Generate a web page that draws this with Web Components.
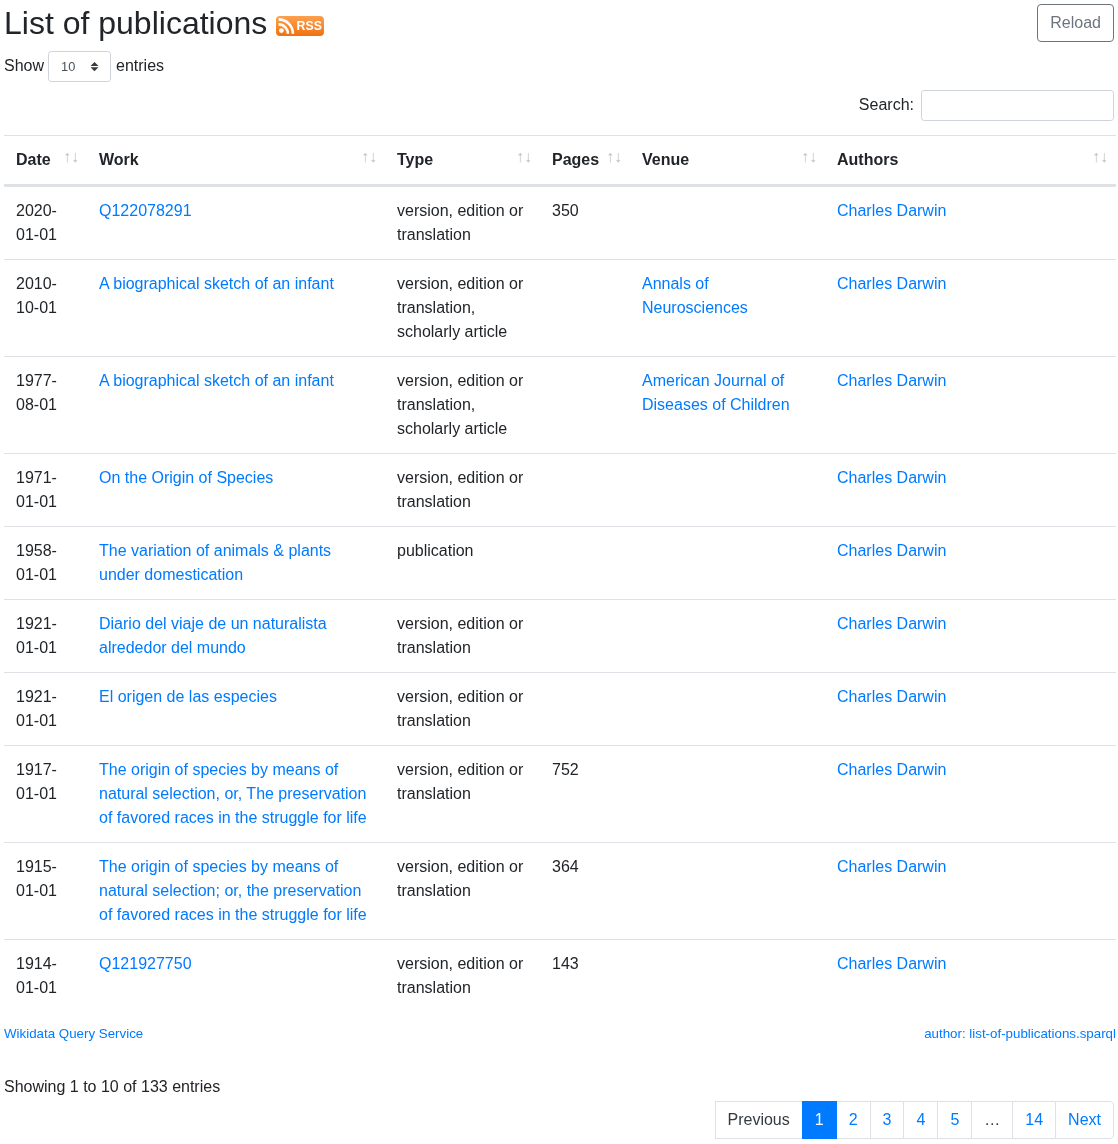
<!DOCTYPE html>
<html lang="en">
<head>
<meta charset="utf-8">
<title>List of publications</title>
<style>
  html, body { margin: 0; background: #fff; }
  body { font: 16px/24px "Liberation Sans", Arial, sans-serif; color: #212529; }
</style>
</head>
<body>
<pub-page>
  <pub-header slot="header">List of publications</pub-header>
  <entries-length slot="length" value="10"></entries-length>
  <search-box slot="search"></search-box>
  <pub-table slot="table"></pub-table>
  <source-links slot="links"></source-links>
  <table-info slot="info">Showing 1 to 10 of 133 entries</table-info>
  <page-nav slot="nav"></page-nav>
</pub-page>

<script>
///////////////////////
////// Page data //////
///////////////////////

const VT = 'version, edition or translation';
const SA = 'version, edition or translation, scholarly article';

const rows = [
  ['2020-01-01', 'Q122078291', VT, '350', ''],
  ['2010-10-01', 'A biographical sketch of an infant', SA, '', 'Annals of Neurosciences'],
  ['1977-08-01', 'A biographical sketch of an infant', SA, '', 'American Journal of Diseases of Children'],
  ['1971-01-01', 'On the Origin of Species', VT, '', ''],
  ['1958-01-01', 'The variation of animals & plants under domestication', 'publication', '', ''],
  ['1921-01-01', 'Diario del viaje de un naturalista alrededor del mundo', VT, '', ''],
  ['1921-01-01', 'El origen de las especies', VT, '', ''],
  ['1917-01-01', 'The origin of species by means of natural selection, or, The preservation of favored races in the struggle for life', VT, '752', ''],
  ['1915-01-01', 'The origin of species by means of natural selection; or, the preservation of favored races in the struggle for life', VT, '364', ''],
  ['1914-01-01', 'Q121927750', VT, '143', ''],
];

const escapeHtml = (s) => s.replace(/&/g, '&amp;').replace(/</g, '&lt;');

///////////////////////
///// Components //////
///////////////////////

class PubPage extends HTMLElement {
  constructor() {
    super();
    this.attachShadow({ mode: 'open' });
    this.shadowRoot.innerHTML = `
      <style>
        :host { display: block; padding: 4px 2px 0 4px; will-change: transform; }
        .length { margin-top: 9px; }
        .search { display: flex; justify-content: flex-end; margin: 8px 2px 14px 0; }
        .info { margin-top: 31px; }
        .nav { display: flex; justify-content: flex-end; margin: 2px 2px 0 0; }
      </style>
      <slot name="header"></slot>
      <div class="length"><slot name="length"></slot></div>
      <div class="search"><slot name="search"></slot></div>
      <slot name="table"></slot>
      <slot name="links"></slot>
      <div class="info"><slot name="info"></slot></div>
      <div class="nav"><slot name="nav"></slot></div>
    `;
  }
}

class PubHeader extends HTMLElement {
  constructor() {
    super();
    this.attachShadow({ mode: 'open' });
    this.shadowRoot.innerHTML = `
      <style>
        :host { display: flex; justify-content: space-between; align-items: flex-start; padding-right: 2px; }
        h1 { margin: 0; font-size: 32px; line-height: 38px; font-weight: 400; display: flex; align-items: center; gap: 9px; }
        svg { display: block; margin-top: 6px; }
        button {
          font: inherit; height: 38px; padding: 0 12px; color: #6c757d; background: transparent;
          border: 1px solid #6c757d; border-radius: 4px;
        }
      </style>
      <h1><span><slot></slot></span>
        <svg width="48" height="20" viewBox="0 0 48 20">
          <defs>
            <linearGradient id="rss" x1="0" y1="0" x2="0" y2="1">
              <stop offset="0" stop-color="#fca050"/>
              <stop offset=".5" stop-color="#f98a30"/>
              <stop offset="1" stop-color="#f0700f"/>
            </linearGradient>
          </defs>
          <rect width="48" height="20" rx="4" fill="url(#rss)"/>
          <circle cx="5.4" cy="14.6" r="2.4" fill="#fff"/>
          <path d="M2.6 8.4a9.3 9.3 0 0 1 9.3 9.3" fill="none" stroke="#fff" stroke-width="2.6"/>
          <path d="M2.6 3.4a14.3 14.3 0 0 1 14.3 14.3" fill="none" stroke="#fff" stroke-width="2.6"/>
          <text x="20.6" y="14" font-family="Liberation Sans, sans-serif" font-size="12.3" font-weight="700" fill="#fff">RSS</text>
        </svg>
      </h1>
      <button type="button">Reload</button>
    `;
  }
}

class EntriesLength extends HTMLElement {
  constructor() {
    super();
    this.attachShadow({ mode: 'open' });
    const value = this.getAttribute('value');
    this.shadowRoot.innerHTML = `
      <style>
        :host { display: flex; align-items: center; gap: 4px; height: 31px; }
        :host > span { margin-bottom: 2px; }
        .pick {
          position: relative; box-sizing: border-box; width: 63px; height: 31px; margin-right: 1px;
          border: 1px solid #ced4da; border-radius: 3.2px; font-size: 12.8px; line-height: 30px; padding-left: 12px;
          color: #495057;
        }
        svg { position: absolute; right: 11.5px; top: 9px; }
      </style>
      <span>Show</span>
      <div class="pick"><span>${value}</span>
        <svg width="9" height="11" viewBox="0 0 9 11"><path d="M4.5 1 8.5 5H.5zM.5 6.2h8l-4 4z" fill="#343a40"/></svg>
      </div>
      <span>entries</span>
    `;
  }
}

class SearchBox extends HTMLElement {
  constructor() {
    super();
    this.attachShadow({ mode: 'open' });
    this.shadowRoot.innerHTML = `
      <style>
        :host { display: flex; align-items: center; gap: 7px; }
        label { margin-bottom: 2px; }
        input {
          box-sizing: border-box; width: 193px; height: 31px; padding: 4px 8px; font: inherit;
          border: 1px solid #ced4da; border-radius: 3.2px; outline: none;
        }
      </style>
      <label for="q">Search:</label><input id="q" type="search">
    `;
  }
}

class PubTable extends HTMLElement {
  constructor() {
    super();
    this.attachShadow({ mode: 'open' });
    const heads = ['Date', 'Work', 'Type', 'Pages', 'Venue', 'Authors'];
    const body = rows.map(([date, work, type, pages, venue]) => `
      <tr>
        <td>${date}</td>
        <td><a href="#">${escapeHtml(work)}</a></td>
        <td>${type}</td>
        <td>${pages}</td>
        <td>${venue ? `<a href="#">${venue}</a>` : ''}</td>
        <td><a href="#">Charles Darwin</a></td>
      </tr>`).join('');
    this.shadowRoot.innerHTML = `
      <style>
        :host { display: block; }
        table { width: 1112px; table-layout: fixed; border-collapse: collapse; }
        th, td { padding: 12px; text-align: left; vertical-align: top; border-top: 1px solid #dee2e6; }
        th {
          position: relative; padding-right: 30px; font-weight: 700; vertical-align: bottom;
          border-bottom: 3px solid #dee2e6; height: 24px;
        }
        th::before, th::after { position: absolute; bottom: 15px; opacity: .3; font-weight: 700; line-height: 24px; }
        th::before { content: "\\2191"; right: 16px; }
        th::after { content: "\\2193"; right: 8px; }
        tr:first-child td { border-top: 0; }
        a { color: #007bff; text-decoration: none; }
      </style>
      <table>
        <colgroup>
          <col style="width:83px"><col style="width:298px"><col style="width:155px">
          <col style="width:90px"><col style="width:195px"><col style="width:291px">
        </colgroup>
        <thead><tr>${heads.map((h) => `<th>${h}</th>`).join('')}</tr></thead>
        <tbody>${body}</tbody>
      </table>
    `;
  }
}

class SourceLinks extends HTMLElement {
  constructor() {
    super();
    this.attachShadow({ mode: 'open' });
    this.shadowRoot.innerHTML = `
      <style>
        :host { display: flex; justify-content: space-between; margin-top: 12px; font-size: 13.33px; line-height: 20px; }
        a { color: #007bff; text-decoration: none; }
      </style>
      <a href="#">Wikidata Query Service</a>
      <a href="#">author: list-of-publications.sparql</a>
    `;
  }
}

class TableInfo extends HTMLElement {
  constructor() {
    super();
    this.attachShadow({ mode: 'open' });
    this.shadowRoot.innerHTML = `<style>:host { display: block; }</style><slot></slot>`;
  }
}

class PageNav extends HTMLElement {
  constructor() {
    super();
    this.attachShadow({ mode: 'open' });
    const items = [
      ['Previous', 'off'], ['1', 'on'], ['2'], ['3'], ['4'], ['5'], ['\u2026', 'off'], ['14'], ['Next'],
    ];
    this.shadowRoot.innerHTML = `
      <style>
        :host { display: flex; }
        a {
          display: block; padding: 6px 12px; margin-left: -1px; line-height: 24px; text-decoration: none;
          color: #007bff; background: #fff; border: 1px solid #dee2e6;
        }
        a.off { color: #343a40; }
        a.on { color: #fff; background: #007bff; border-color: #007bff; position: relative; }
        a:first-child { margin-left: 0; border-radius: 4px 0 0 4px; }
        a:last-child { border-radius: 0 4px 4px 0; }
      </style>
      ${items.map(([t, c]) => `<a href="#" class="${c || ''}">${t}</a>`).join('')}
    `;
  }
}

customElements.define('pub-page', PubPage);
customElements.define('pub-header', PubHeader);
customElements.define('entries-length', EntriesLength);
customElements.define('search-box', SearchBox);
customElements.define('pub-table', PubTable);
customElements.define('source-links', SourceLinks);
customElements.define('table-info', TableInfo);
customElements.define('page-nav', PageNav);
</script>
</body>
</html>
